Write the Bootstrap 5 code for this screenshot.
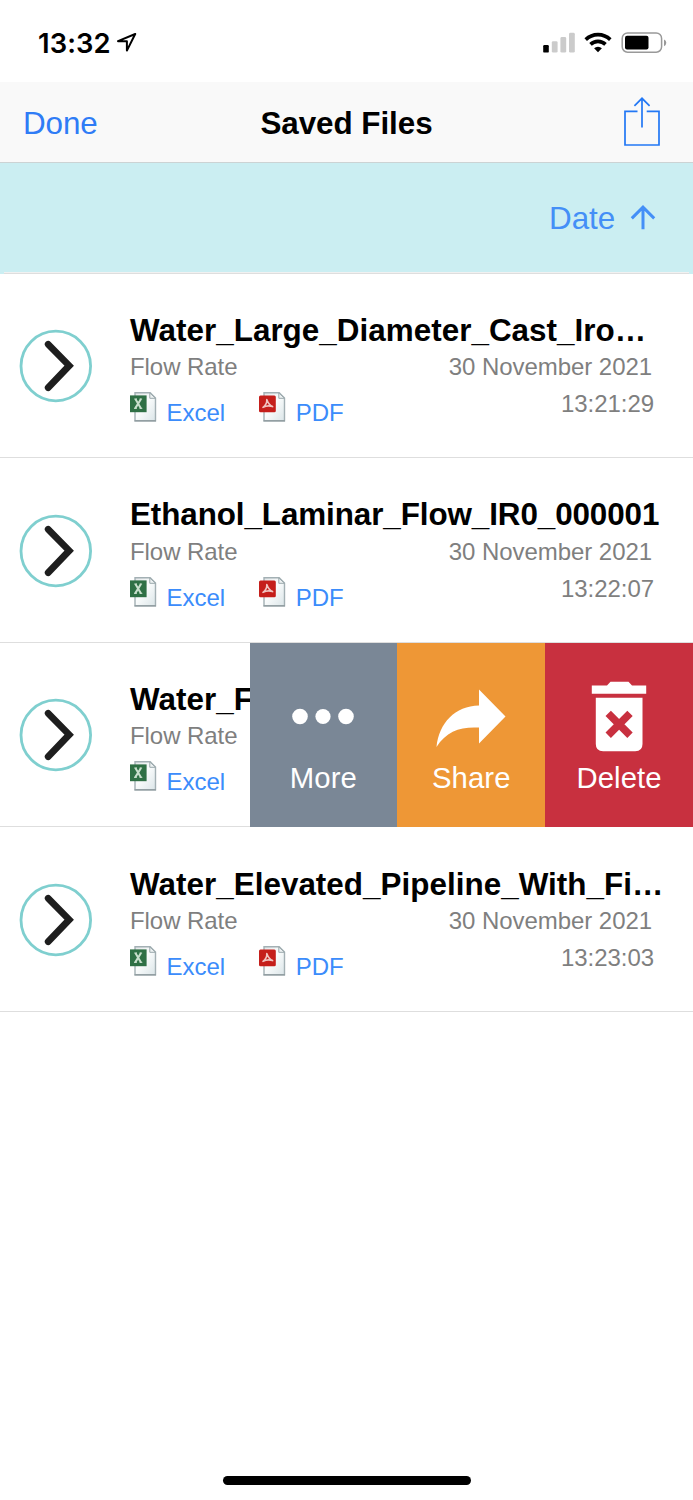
<!DOCTYPE html>
<html lang="en">
<head>
<meta charset="utf-8">
<meta name="viewport" content="width=device-width, initial-scale=1">
<title>Saved Files</title>
<link href="https://cdn.jsdelivr.net/npm/bootstrap@5.3.0/dist/css/bootstrap.min.css" rel="stylesheet">
<style>
  html, body { height: 1500px; overflow: hidden; }
  body { font-family: "Liberation Sans", Arial, sans-serif; background: #fff; color: #000; }
  svg { display: block; flex: none; }
  .status-bar { height: 81.5px; padding: 0 26px 0 38px; }
  .clock { font: 600 27.4px/30px Inter, sans-serif; letter-spacing: .1px; margin-top: 28px; }
  .title-bar { height: 81.5px; padding: 0 32px 0 23px; background: #f9f9f9; border-bottom: 1px solid #ccd3d4; display: grid; grid-template-columns: 1fr auto 1fr; font-size: 31.4px; line-height: 36px; }
  .title-bar a { color: #2f7cf6; letter-spacing: -.1px; padding-top: 5px; }
  .title-bar h1 { font-size: 31.4px; line-height: 36px; padding: 5px 0 0 9px; letter-spacing: -.05px; }
  .sort-bar { height: 111.3px; margin-bottom: -1px; padding: 38px 37px 0 0; background: #cbeef2; color: #448ff7; font-size: 31.4px; line-height: 36px; letter-spacing: -.1px; }
  .sort-bar::after { content: ""; position: absolute; left: 4px; right: 4px; bottom: 0; height: 2px; background: #f1f1f1; border-bottom: 1px solid #dedede; }
  .file-row { height: 184.667px; border-bottom: 1.3px solid #dedede; padding-left: 19px; }
  .open-icon { margin: 55.700px 37px 0 0; }
  .file-info { padding-top: 39.5px; width: 562px; }
  .file-name { font-size: 31.4px; line-height: 36px; font-weight: 700; white-space: nowrap; margin: 0 0 3.2px; letter-spacing: .03px; }
  .file-name.fit { letter-spacing: -.09px; }
  .meta { font-size: 24px; line-height: 30px; color: #7f7f7f; letter-spacing: -.06px; padding-right: 40px; }
  .meta .time { margin-top: 7px; margin-right: -2px; }
  .files { margin-top: 8px; line-height: 30px; padding-top: 8px; }
  .files a { color: #3b8cfb; text-decoration: none; letter-spacing: 0; }
  .files svg { margin: -7px 0 0 -.5px; }
  .files a + a { margin-left: 34px; }
  .files span { margin-left: 9px; }
  .swipe { top: .4px; right: 0; width: 443.5px; height: 184.2px; background: #333; }
  .swipe a { flex: 1; color: #fff; text-decoration: none; font-size: 29.3px; line-height: 34px; letter-spacing: .1px; text-align: center; }
  .swipe svg { margin: 32px auto 6px; }
  .act-more { background: #7a8796; }
  .act-share { background: #ee9736; }
  .act-delete { background: #c8303f; }
  .home-bar { left: 223px; top: 1475.5px; width: 247.5px; height: 9.5px; border-radius: 5px; background: #000; }
</style>
</head>
<body>
<svg width="0" height="0" class="position-absolute">
  <defs>
    <linearGradient id="sheet" x1="0" y1="0" x2="1" y2="1"><stop offset="0" stop-color="#e2e6e8"/><stop offset=".45" stop-color="#fafcfc"/><stop offset="1" stop-color="#dbe5e8"/></linearGradient>
    <symbol id="open" viewBox="0 0 74 74">
      <circle cx="36.8" cy="37" r="34.8" fill="none" stroke="#7fcfcf" stroke-width="2.8"/>
      <path d="M29.200 15.300 50.200 36.700 29.200 58.700" fill="none" stroke="#1e1e1e" stroke-width="6.8" stroke-linecap="round"/>
    </symbol>
    <symbol id="page" viewBox="0 0 28 32">
      <path d="M5 1.8H20.2L25.5 7V29.8H5Z" fill="url(#sheet)" stroke="#a3b0b4" stroke-width="1.4"/>
      <path d="M19.8 2V7.3H25.5Z" fill="#eef2f3" stroke="#9aa8ac" stroke-width="1"/>
      <path d="M4.5 29.9H26" stroke="#8d999c" stroke-width="1.2"/>
    </symbol>
    <symbol id="xls" viewBox="0 0 28 32">
      <use href="#page"/>
      <rect x="0" y="4.4" width="16.6" height="16.8" fill="#2f7045"/>
      <path d="M5.400 8 11 17.400M11 8 5.200 17.400" stroke="#c9dfcd" stroke-width="2" fill="none"/>
      <path d="M4.300 8H7M9.600 8H12.100M4 17.400H6.800M9.600 17.400H12.300" stroke="#c9dfcd" stroke-width="1"/>
    </symbol>
    <symbol id="pdf" viewBox="0 0 28 32">
      <use href="#page"/>
      <rect x="0" y="4.4" width="16.8" height="16.8" rx="1.5" fill="#c51f1b"/>
      <path d="M7.800 8.500C8.900 11.500 10.600 14.500 13.600 15.600 10.800 14.500 6.500 15 4 16.400 6.500 14.500 8 11.500 7.800 8.500Z" fill="none" stroke="#f1c4c0" stroke-width="1.6" stroke-linejoin="round"/>
    </symbol>
  </defs>
</svg>

<header>
  <div class="status-bar d-flex align-items-start">
    <div class="clock">13:32</div>
    <svg style="margin:32px 0 0 6px" width="20" height="21" viewBox="0 0 20 21"><path d="M18.200 2 1 9.200H9.900V18.600Z" fill="none" stroke="#000" stroke-width="2" stroke-linejoin="round"/></svg>
    <svg class="ms-auto" style="margin-top:32px" width="124" height="22" viewBox="543 32 124 22">
      <rect x="543.2" y="45" width="5.6" height="7.6" rx="1.2"/>
      <g fill="#cbcbcb"><rect x="551.8" y="41.2" width="5.8" height="11.4" rx="1.4"/><rect x="560.4" y="37" width="5.8" height="15.6" rx="1.4"/><rect x="569" y="32.8" width="5.8" height="19.8" rx="1.4"/></g>
      <g fill="none" stroke="#000" stroke-width="3.6"><path d="M585.7 39.6A17.6 17.6 0 0 1 610.3 39.6"/><path d="M590.5 44.4A10.8 10.8 0 0 1 605.5 44.4"/></g>
      <path d="M594.1 48.3A5.8 5.8 0 0 1 601.9 48.3L598 52.3Z"/>
      <rect x="622.2" y="33" width="39.4" height="19.2" rx="5.4" fill="none" stroke="#999" stroke-width="1.5"/>
      <rect x="625" y="35.8" width="23.5" height="13.8" rx="2"/>
      <path d="M664 39.4Q666.3 40.4 666.3 42.7T664 46.2Z" fill="#999"/>
    </svg>
  </div>
  <nav class="title-bar align-items-center">
    <a href="#" class="text-decoration-none">Done</a>
    <h1 class="mb-0 fw-bold">Saved Files</h1>
    <svg class="ms-auto" width="38" height="50" viewBox="0 0 38 50" fill="none" stroke="#2378f5" stroke-width="1.7"><path d="M14.5 14.4H2V48H36V14.4H23.7M19 30.5V1.3M11.4 8.9 19 1.3 26.6 8.9"/></svg>
  </nav>
</header>

<div class="sort-bar position-relative d-flex justify-content-end">
  <span>Date</span>
  <svg style="margin:4px 0 0 15px" width="26" height="26" viewBox="0 0 26 26" fill="none" stroke="#448ff7" stroke-width="3"><path d="M13 24.2V2.4M1.8 13.4 13 2.2 24.2 13.4"/></svg>
</div>

<main>
  <article class="file-row d-flex">
    <svg class="open-icon" width="74" height="74"><use href="#open"/></svg>
    <div class="file-info">
      <h2 class="file-name">Water_Large_Diameter_Cast_Iro…</h2>
      <div class="meta d-flex justify-content-between">
        <div><div>Flow Rate</div><div class="files d-flex"><a href="#" class="d-flex"><svg width="28" height="32"><use href="#xls"/></svg><span>Excel</span></a><a href="#" class="d-flex"><svg width="28" height="32"><use href="#pdf"/></svg><span>PDF</span></a></div></div>
        <div class="text-end"><div>30 November 2021</div><div class="time">13:21:29</div></div>
      </div>
    </div>
  </article>
  <article class="file-row d-flex">
    <svg class="open-icon" width="74" height="74"><use href="#open"/></svg>
    <div class="file-info">
      <h2 class="file-name fit">Ethanol_Laminar_Flow_IR0_000001</h2>
      <div class="meta d-flex justify-content-between">
        <div><div>Flow Rate</div><div class="files d-flex"><a href="#" class="d-flex"><svg width="28" height="32"><use href="#xls"/></svg><span>Excel</span></a><a href="#" class="d-flex"><svg width="28" height="32"><use href="#pdf"/></svg><span>PDF</span></a></div></div>
        <div class="text-end"><div>30 November 2021</div><div class="time">13:22:07</div></div>
      </div>
    </div>
  </article>
  <article class="file-row d-flex position-relative">
    <svg class="open-icon" width="74" height="74"><use href="#open"/></svg>
    <div class="file-info">
      <h2 class="file-name">Water_F</h2>
      <div class="meta">
        <div>Flow Rate</div><div class="files d-flex"><a href="#" class="d-flex"><svg width="28" height="32"><use href="#xls"/></svg><span>Excel</span></a></div>
      </div>
    </div>
    <div class="swipe position-absolute d-flex">
      <a href="#" class="act-more"><svg width="76" height="80" viewBox="0 0 76 80" fill="#fff"><circle cx="15" cy="41.5" r="7.8"/><circle cx="38" cy="41.5" r="7.6"/><circle cx="61" cy="41.5" r="7.8"/></svg>More</a>
      <a href="#" class="act-share"><svg width="76" height="80" viewBox="0 0 76 80" fill="#fff"><path d="M46 14.500 72.500 41.500 46 68.500V52.600C28 51.500 13.500 56 3.500 72 6 48 22 31 46 30.500Z"/></svg>Share</a>
      <a href="#" class="act-delete"><svg width="76" height="80" viewBox="0 0 76 80" fill="#fff"><path d="M10.800 10.600H26L29.500 6.800H47.500L51 10.600H65.200V18.800H10.800ZM14.800 22.700H61.500V69Q61.500 76.300 54.200 76.300H22.100Q14.800 76.300 14.800 69Z"/><path d="M27.200 38.400 49 60.200M49 38.400 27.200 60.200" stroke="#c8303f" stroke-width="7.600"/></svg>Delete</a>
    </div>
  </article>
  <article class="file-row d-flex">
    <svg class="open-icon" width="74" height="74"><use href="#open"/></svg>
    <div class="file-info">
      <h2 class="file-name">Water_Elevated_Pipeline_With_Fi…</h2>
      <div class="meta d-flex justify-content-between">
        <div><div>Flow Rate</div><div class="files d-flex"><a href="#" class="d-flex"><svg width="28" height="32"><use href="#xls"/></svg><span>Excel</span></a><a href="#" class="d-flex"><svg width="28" height="32"><use href="#pdf"/></svg><span>PDF</span></a></div></div>
        <div class="text-end"><div>30 November 2021</div><div class="time">13:23:03</div></div>
      </div>
    </div>
  </article>
</main>
<div class="home-bar position-absolute"></div>
<script src="https://cdn.jsdelivr.net/npm/bootstrap@5.3.0/dist/js/bootstrap.bundle.min.js"></script>
</body>
</html>
